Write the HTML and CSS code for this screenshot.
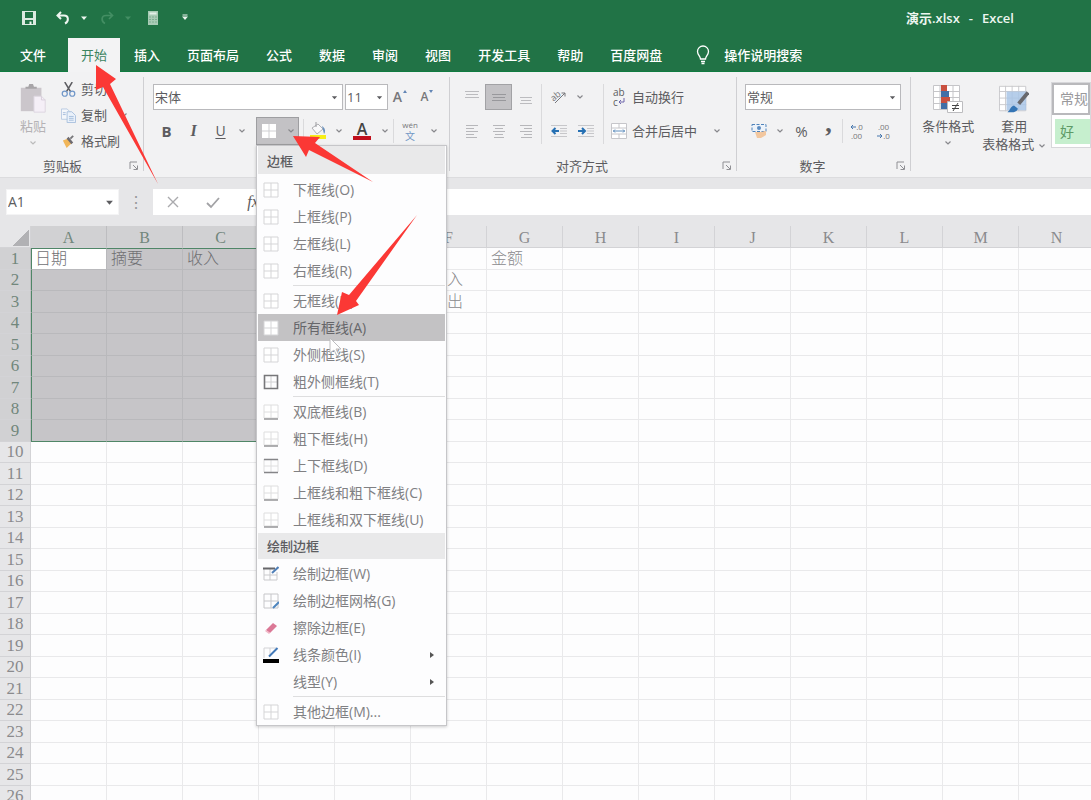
FILE: index.html
```html
<!DOCTYPE html>
<html lang="zh-CN">
<head>
<meta charset="utf-8">
<title>演示.xlsx - Excel</title>
<link rel="stylesheet" href="styles.css">
</head>
<body>
<svg class="defs" aria-hidden="true">
  <symbol id="chev" viewBox="0 0 8 8"><path d="M1.500 2.500 4 5 6.500 2.500" fill="none" stroke="currentColor" stroke-width="1.200"/></symbol>
  <symbol id="caret" viewBox="0 0 8 8"><path d="M1 2.500h6L4 6z" fill="currentColor"/></symbol>
  <symbol id="launch" viewBox="0 0 10 10"><path d="M1 8V1h7M4 4l4 4M8.500 4.500v4h-4" fill="none" stroke="#909094"/></symbol>
  <symbol id="grid" viewBox="0 0 16 16"><path d="M1 1h14v14H1zM8 1v14M1 8h14" fill="#fff" stroke="#d5d5d7"/></symbol>
  <symbol id="grid-outer" viewBox="0 0 16 16"><path d="M8 1v14M1 8h14" stroke="#d0d0d2"/><path d="M1.500 1.500h13v13h-13z" fill="none" stroke="#77777a" stroke-width="1.600"/></symbol>
  <symbol id="grid-bottom" viewBox="0 0 16 16"><path d="M1 1h14v13H1zM8 1v13M1 8h14" fill="#fff" stroke="#dededf"/><path d="M1 15h14" stroke="#949497" stroke-width="1.500"/></symbol>
  <symbol id="grid-topbottom" viewBox="0 0 16 16"><path d="M1 1v13M15 1v13M8 1v13M1 8h14" stroke="#dededf"/><path d="M1 1.500h14M1 14.500h14" stroke="#858588" stroke-width="1.500"/></symbol>
</svg>

<div class="app">
  <header class="titlebar">
    <button class="qat save" aria-label="保存"><svg viewBox="0 0 14 14"><path d="M0 0h14v14H0z" fill="#dcebe1"/><path d="M3 1h8v6H3zM3 9h8v4H3z" fill="#217346"/><path d="M7.500 10.500h2V14h-2z" fill="#edf6f0"/></svg></button>
    <button class="qat undo" aria-label="撤消"><svg viewBox="0 0 14 14"><path d="M5 1 1.500 4.500 5 8M2 4.500h6c5 0 5 6 1 8" fill="none" stroke="#edf6f0" stroke-width="2"/></svg></button>
    <button class="qat mini" aria-label="撤消选项"><svg viewBox="0 0 8 8"><use href="#caret"/></svg></button>
    <button class="qat redo" aria-label="恢复"><svg viewBox="0 0 14 14"><path d="M9 1l3.500 3.500L9 8M12 4.500H6c-5 0-5 6-1 8" fill="none" stroke="#438e63" stroke-width="1.700"/></svg></button>
    <button class="qat mini dim" aria-label="恢复选项"><svg viewBox="0 0 8 8"><use href="#caret"/></svg></button>
    <button class="qat calc" aria-label="计算器"><svg viewBox="0 0 14 14"><path d="M2 0h10v14H2z" fill="#a9cbb6"/><path d="M3.500 1.500h7v2h-7z" fill="#e3f0e8"/><path d="M3 6h8M3 8.500h8M3 11h8" stroke="#7eae92" stroke-dasharray="2 1"/></svg></button>
    <button class="qat more" aria-label="自定义快速访问工具栏"><svg viewBox="0 0 8 8"><path d="M1.500 1h5" stroke="currentColor"/><use href="#caret"/></svg></button>
    <h1 class="doc-title"><span>演示.xlsx</span><span>-</span><span>Excel</span></h1>
  </header>

  <nav class="tabs">
    <button class="tab file">文件</button>
    <button class="tab active">开始</button>
    <button class="tab">插入</button>
    <button class="tab">页面布局</button>
    <button class="tab">公式</button>
    <button class="tab">数据</button>
    <button class="tab">审阅</button>
    <button class="tab">视图</button>
    <button class="tab">开发工具</button>
    <button class="tab">帮助</button>
    <button class="tab">百度网盘</button>
    <button class="tab tell"><svg viewBox="0 0 14 20"><path d="M4.500 14c0-3-3-4-3-7.500a5.500 5.500 0 0 1 11 0c0 3.500-3 4.500-3 7.500zM5 16.500h4M5.500 18.500h3" fill="none" stroke="#fff" stroke-width="1.300"/></svg>操作说明搜索</button>
  </nav>

  <section class="ribbon">
    <div class="group clipboard">
      <div class="group-body">
        <button class="big paste"><svg viewBox="0 0 30 32"><path d="M2 4h22v25H2z" fill="#cbc6cb"/><path d="M7 5V3h3l1-3h4l1 3h3v2z" fill="#a8a5a8"/><path d="M16 13h8l4 4v13H16z" fill="#f5eff7" stroke="#dcd5df"/><path d="M24 13v4h4" fill="none" stroke="#d6ceda"/></svg><span>粘贴</span><svg class="chev"><use href="#chev"/></svg></button>
        <div class="clip-list">
          <button><svg viewBox="0 0 16 16"><path d="M4 0l6 10M12 0 6 10" stroke="#5c5c60" stroke-width="1.600"/><circle cx="4" cy="12.500" r="2.700" fill="none" stroke="#6f96c8" stroke-width="1.300"/><circle cx="12" cy="12.500" r="2.700" fill="none" stroke="#6f96c8" stroke-width="1.300"/></svg>剪切</button>
          <button><svg viewBox="0 0 16 16"><path d="M.500 1h6l3 3v8h-9z" fill="#f4f7fb" stroke="#b9cbe2"/><path d="M6.500 4h5l4 4v7.500h-9z" fill="#eaf1fa" stroke="#a9c0dd"/><path d="M8.500 9h5M8.500 11h5M8.500 13h5M2 5h3M2 7h3" stroke="#a4bddc"/></svg>复制<svg class="chev"><use href="#chev"/></svg></button>
          <button><svg viewBox="0 0 16 16"><path d="M2 7l5-2 4 5-5 5z" fill="#f1b659"/><path d="M6 5l2-2 5 6-2 2z" fill="#6e6b70"/><path d="M10 5l3-3" stroke="#77777a" stroke-width="2"/></svg>格式刷</button>
        </div>
      </div>
      <footer><span>剪贴板</span><button aria-label="剪贴板设置"><svg><use href="#launch"/></svg></button></footer>
    </div>
    <i class="rule"></i>

    <div class="group font">
      <div class="group-body rows">
        <div class="row">
          <label class="combo face"><select aria-label="字体"><option>宋体</option></select><svg><use href="#caret"/></svg></label>
          <label class="combo size"><select aria-label="字号"><option>11</option></select><svg><use href="#caret"/></svg></label>
          <button class="tool grow" aria-label="增大字号">A<svg viewBox="0 0 8 8"><path d="M1 4 3 1l2 3z" fill="#6286b5"/></svg></button>
          <button class="tool shrink" aria-label="减小字号">A<svg viewBox="0 0 8 8"><path d="M1 1h4L3 4z" fill="#6286b5"/></svg></button>
        </div>
        <div class="row">
          <button class="tool bold">B</button>
          <button class="tool italic">I</button>
          <button class="tool under">U</button>
          <button class="drop" aria-label="下划线选项"><svg><use href="#chev"/></svg></button>
          <div class="borders">
            <button class="borders-btn" aria-label="边框" aria-expanded="true"><svg class="ic" viewBox="0 0 16 16"><path d="M1 1h14v14H1z" fill="#fff"/><path d="M8 1v14M1 8h14" stroke="#cfcfd2"/></svg><svg class="chev"><use href="#chev"/></svg></button>
            <div class="menu" role="menu">
              <h2>边框</h2>
              <button role="menuitem"><svg><use href="#grid"/></svg>下框线(O)</button>
              <button role="menuitem"><svg><use href="#grid"/></svg>上框线(P)</button>
              <button role="menuitem"><svg><use href="#grid"/></svg>左框线(L)</button>
              <button role="menuitem"><svg><use href="#grid"/></svg>右框线(R)</button>
              <hr>
              <button role="menuitem"><svg><use href="#grid"/></svg>无框线(N)</button>
              <button role="menuitem" class="hot"><svg><use href="#grid"/></svg>所有框线(A)</button>
              <button role="menuitem"><svg><use href="#grid"/></svg>外侧框线(S)</button>
              <button role="menuitem"><svg><use href="#grid-outer"/></svg>粗外侧框线(T)</button>
              <hr>
              <button role="menuitem"><svg><use href="#grid-bottom"/></svg>双底框线(B)</button>
              <button role="menuitem"><svg><use href="#grid-bottom"/></svg>粗下框线(H)</button>
              <button role="menuitem"><svg><use href="#grid-topbottom"/></svg>上下框线(D)</button>
              <button role="menuitem"><svg><use href="#grid-bottom"/></svg>上框线和粗下框线(C)</button>
              <button role="menuitem"><svg><use href="#grid-bottom"/></svg>上框线和双下框线(U)</button>
              <h2 class="second">绘制边框</h2>
              <button role="menuitem"><svg viewBox="0 0 16 16"><path d="M1 3v11h13V6M7 3v11M1 9h13" fill="none" stroke="#c9c9cc"/><path d="M0 2.500h12" stroke="#66666a" stroke-width="2"/><path d="M15.500 1 9 7" stroke="#4f7fb8" stroke-width="2"/></svg>绘制边框(W)</button>
              <button role="menuitem"><svg viewBox="0 0 16 16"><path d="M1 1h14v14H1zM8 1v14M1 8h14" fill="none" stroke="#c6c6c9"/><path d="M16 9l-6 6" stroke="#4f86bf" stroke-width="2"/></svg>绘制边框网格(G)</button>
              <button role="menuitem"><svg viewBox="0 0 16 16"><path d="M3 10 10 3l4 3-7 7z" fill="#db7896"/><path d="M3 10l4 3-1 1-4-3z" fill="#f0b4c4"/></svg>擦除边框(E)</button>
              <button role="menuitem"><svg viewBox="0 0 16 16"><path d="M1 11V1h12M7 1v9" fill="none" stroke="#d3d3d6"/><path d="M14.500 1 6 9.500" stroke="#4279b8" stroke-width="2"/><path d="M0 12h16v4H0z" fill="#000"/></svg>线条颜色(I)<svg class="sub" viewBox="0 0 8 8"><path d="M2 1v6l4-3z" fill="#555"/></svg></button>
              <button role="menuitem"><svg></svg>线型(Y)<svg class="sub" viewBox="0 0 8 8"><path d="M2 1v6l4-3z" fill="#555"/></svg></button>
              <hr>
              <button role="menuitem"><svg><use href="#grid"/></svg>其他边框(M)...</button>
              <svg class="pointer" viewBox="0 0 14 20"><path d="M1 1v15l4-3 3 6 2-1-3-6h5z" fill="#fff" stroke="#bcbcbf"/></svg>
            </div>
          </div>
          <i class="divide"></i>
          <button class="tool" aria-label="填充颜色"><svg class="ic18" viewBox="0 0 18 18"><path d="M3 6l6-4 5 5-6 5z" fill="#f9f9fa" stroke="#b0b0b4"/><path d="M7 0v5" stroke="#9a9a9e"/><path d="M13 4c3 2 4 5 2 8z" fill="#6b92bd"/><path d="M1 13h16v4H1z" fill="#f7ee17"/></svg></button>
          <button class="drop" aria-label="填充选项"><svg><use href="#chev"/></svg></button>
          <button class="tool color" aria-label="字体颜色">A</button>
          <button class="drop" aria-label="颜色选项"><svg><use href="#chev"/></svg></button>
          <i class="divide"></i>
          <button class="tool phonetic" aria-label="拼音"><small>wén</small><span>文</span></button>
          <button class="drop" aria-label="拼音选项"><svg><use href="#chev"/></svg></button>
        </div>
      </div>
    </div>
    <i class="rule"></i>

    <div class="group align">
      <div class="group-body align-body">
        <div class="align-grid">
          <button class="tool" aria-label="顶端对齐"><svg class="ic16" viewBox="0 0 16 16"><path d="M1 2.500h14M2 5.500h12M1 8.500h14" stroke="#bcbcbf"/></svg></button>
          <button class="tool on" aria-label="垂直居中"><svg class="ic16" viewBox="0 0 16 16"><path d="M1 5.500h14M2 8.500h12M1 11.500h14" stroke="#98989c"/></svg></button>
          <button class="tool" aria-label="底端对齐"><svg class="ic16" viewBox="0 0 16 16"><path d="M2 8.500h12M3 11.500h10M2 14.500h12" stroke="#bcbcbf"/></svg></button>
          <button class="tool" aria-label="左对齐"><svg class="ic16" viewBox="0 0 16 16"><path d="M2 2.500h12M2 5.500h8M2 8.500h12M2 11.500h8M2 14.500h11" stroke="#b7b7ba"/></svg></button>
          <button class="tool" aria-label="居中"><svg class="ic16" viewBox="0 0 16 16"><path d="M2 2.500h12M4 5.500h8M2 8.500h12M4 11.500h8M3 14.500h10" stroke="#b7b7ba"/></svg></button>
          <button class="tool" aria-label="右对齐"><svg class="ic16" viewBox="0 0 16 16"><path d="M2 2.500h12M6 5.500h8M2 8.500h12M6 11.500h8M3 14.500h11" stroke="#b7b7ba"/></svg></button>
        </div>
        <i class="divide tall"></i>
        <div class="rows indent">
          <div class="row"><button class="tool" aria-label="方向"><svg class="ic16" viewBox="0 0 16 16"><text x="0" y="10" font-size="9" fill="#77777a" transform="rotate(-40 5 8)">ab</text><path d="M4 14 14 4M10.500 4H14v3.500" fill="none" stroke="#77777a"/></svg></button><button class="drop" aria-label="方向选项"><svg><use href="#chev"/></svg></button></div>
          <div class="row"><button class="tool" aria-label="减少缩进"><svg class="ic16" viewBox="0 0 16 16"><path d="M0 2.500h16M9 5.500h7M9 8h7M9 10.500h7M0 13.500h16" stroke="#c7c7ca"/><path d="M8 8H1.500M4.500 5l-3 3 3 3" fill="none" stroke="#2670b3" stroke-width="2"/></svg></button><button class="tool" aria-label="增加缩进"><svg class="ic16" viewBox="0 0 16 16"><path d="M0 2.500h16M9 5.500h7M9 8h7M9 10.500h7M0 13.500h16" stroke="#c7c7ca"/><path d="M0 8h7M4 5l3 3-3 3" fill="none" stroke="#2670b3" stroke-width="2"/></svg></button></div>
        </div>
        <i class="divide tall"></i>
        <div class="rows wrap">
          <div class="row"><button class="wide"><span class="wrap-icon"><span>ab</span><span>c<svg viewBox="0 0 8 8"><path d="M6 0v4H1M3 2 1 4l2 2" fill="none" stroke="#6f67ac"/></svg></span></span>自动换行</button></div>
          <div class="row"><button class="wide"><svg class="ic16" viewBox="0 0 16 16"><path d="M.500.500h15v15H.500zM0 5h16M0 11h16M8 0v5M8 11v5" fill="#fff" stroke="#c6c6ca"/><path d="M2 8h12M4 6.500 2.500 8 4 9.500M12 6.500 13.500 8 12 9.500" fill="none" stroke="#5c8cbc"/></svg>合并后居中</button><button class="drop" aria-label="合并选项"><svg><use href="#chev"/></svg></button></div>
        </div>
      </div>
      <footer><span>对齐方式</span><button aria-label="对齐设置"><svg><use href="#launch"/></svg></button></footer>
    </div>
    <i class="rule"></i>

    <div class="group number">
      <div class="group-body rows">
        <div class="row"><label class="combo format"><select aria-label="数字格式"><option>常规</option></select><svg><use href="#caret"/></svg></label></div>
        <div class="row">
          <button class="tool" aria-label="会计数字格式"><svg class="ic16" viewBox="0 0 16 16"><path d="M1 1.500h14v7H1z" fill="#edf3fa" stroke="#4f83bb" stroke-dasharray="3 1.500"/><circle cx="8" cy="5" r="2" fill="#5c8cc0"/><path d="M4 9h6l5-1v4l-5 3H6z" fill="#f2c79f"/></svg></button>
          <button class="drop" aria-label="会计格式选项"><svg><use href="#chev"/></svg></button>
          <button class="tool percent">%</button>
          <button class="tool comma">,</button>
          <i class="divide"></i>
          <button class="tool decimals" aria-label="增加小数位数"><span><svg viewBox="0 0 6 6"><path d="M6 3H1M3 1 1 3l2 2" fill="none" stroke="#4777ad"/></svg>.0</span><span>.00</span></button>
          <button class="tool decimals" aria-label="减少小数位数"><span>.00</span><span><svg viewBox="0 0 6 6"><path d="M0 3h5M3 1l2 2-2 2" fill="none" stroke="#4777ad"/></svg>.0</span></button>
        </div>
      </div>
      <footer><span>数字</span><button aria-label="数字设置"><svg><use href="#launch"/></svg></button></footer>
    </div>
    <i class="rule"></i>

    <div class="group styles">
      <div class="group-body">
        <button class="big"><svg viewBox="0 0 30 30"><path d="M.500 1.500h26v24H.500zM7 1v25M20 1v25M0 7.500h27M0 13.500h27M0 19.500h27" fill="#fff" stroke="#c5c5c8"/><path d="M8 1h6v6H8zM8 13h9v6H8z" fill="#c9503f"/><path d="M8 7h8v6H8zM8 19h6v6H8z" fill="#426fa6"/><path d="M14.500 17.500h15v11h-15z" fill="#fff" stroke="#bcbcbf"/><path d="M19 21.500h7M19 24.500h7M25 19l-5 8" stroke="#444"/></svg><span>条件格式</span><svg class="chev"><use href="#chev"/></svg></button>
        <button class="big"><svg viewBox="0 0 32 30"><path d="M.500 1.500h28v26H.500zM7 1v27M14 1v27M21 1v27M0 7h29M0 14h29M0 21h29" fill="#fff" stroke="#c9c9cc"/><path d="M8 7h21v20H8z" fill="#a9c5e6" opacity=".85"/><path d="M31 8 21 20" stroke="#69696d" stroke-width="4"/><path d="M9 29c3-2 3-6 7-7l4 3c0 3-4 5-11 4z" fill="#3475b5"/></svg><span>套用</span><span class="last">表格格式<svg class="chev"><use href="#chev"/></svg></span></button>
        <div class="gallery"><button class="normal">常规</button><button class="good">好</button></div>
      </div>
    </div>
  </section>

  <section class="formula-bar">
    <label class="combo name"><select aria-label="名称框"><option>A1</option></select><svg><use href="#caret"/></svg></label>
    <span class="dots">⋮</span>
    <div class="formula">
      <button aria-label="取消"><svg viewBox="0 0 14 14"><path d="M2 2l10 10M12 2 2 12" fill="none" stroke="#aaaaad" stroke-width="1.400"/></svg></button>
      <button aria-label="输入"><svg viewBox="0 0 14 14"><path d="M1 8l4 4 8-9" fill="none" stroke="#a2a2a5" stroke-width="1.800"/></svg></button>
      <button class="fx">fx</button>
      <input type="text" aria-label="编辑栏">
    </div>
  </section>

  <main class="sheet"><table><thead></thead><tbody></tbody></table></main>
</div>

<svg class="arrows" viewBox="0 0 1091 800" aria-hidden="true">
  <path d="M96 65 116 79 110 84 158 184 103 87 96 90z"/>
  <path d="M293 136 320 137 315 143 373 182 309 150 306 157z"/>
  <path d="M337 315 342 292 349 295 417 215 356 301 359 305z"/>
</svg>
<script src="sheet.js"></script>
</body>
</html>
```

FILE: sheet.js
```js
const columns = 'ABCDEFGHIJKLMN'.split('');
const values = { A1: '日期', B1: '摘要', C1: '收入', G1: '金额', F2: '总收入', F3: '总支出' };
const lastCol = 3;
const lastRow = 9;

const headRow = document.createElement('tr');
headRow.innerHTML = '<th class="corner" aria-label="全选"></th>' +
  columns.map((c, i) => `<th scope="col"${i <= lastCol ? ' class="sel"' : ''}>${c}</th>`).join('');
document.querySelector('thead').append(headRow);

const body = document.querySelector('tbody');
for (let r = 1; r <= 26; r++) {
  const row = document.createElement('tr');
  row.innerHTML = `<th scope="row"${r <= lastRow ? ' class="sel"' : ''}>${r}</th>` +
    columns.map((c, i) => {
      const cls = [];
      if (i <= lastCol && r <= lastRow) {
        cls.push('sel');
        if (i === 0 && r === 1) cls.push('current');
        if (i === 0) cls.push('edge-l');
        if (r === 1) cls.push('edge-t');
        if (i === lastCol) cls.push('edge-r');
        if (r === lastRow) cls.push('edge-b');
      }
      return `<td class="${cls.join(' ')}">${values[c + r] || ''}</td>`;
    }).join('');
  body.append(row);
}
```

FILE: styles.css
```css
* { box-sizing: border-box; }
body {
  margin: 0;
  font: 13px/18px "Open Sans", "Noto Sans CJK SC", sans-serif;
  color: #5c5c60;
}
button, select, input { font: inherit; color: inherit; border: 0; background: none; padding: 0; margin: 0; }
button { display: flex; align-items: center; justify-content: center; white-space: nowrap; }
svg { flex: none; width: 8px; height: 8px; }
.defs { display: none; }
.app { display: flex; flex-direction: column; height: 100vh; overflow: hidden; background: #fff; }

/* Title bar */
.titlebar { display: flex; flex: none; align-items: center; height: 38px; padding: 0 77px 2px 22px; background: #217346; color: #edf6f0; }
.qat { width: 14px; height: 14px; }
.qat svg { width: 14px; height: 14px; }
.qat.undo { margin-left: 20px; }
.qat.mini, .qat.more { width: 8px; }
.qat.mini { margin-left: 10px; }
.qat.mini svg, .qat.more svg { width: 8px; height: 8px; }
.qat.redo { margin-left: 12px; }
.qat.dim { color: #438e63; }
.qat.calc { margin-left: 14px; }
.qat.more { margin-left: 21px; }
.doc-title { display: flex; gap: 9px; margin: 0 0 0 auto; font-size: 13px; font-weight: 600; }

/* Ribbon tabs */
.tabs { display: flex; flex: none; gap: 1px; height: 34px; padding-left: 7px; background: #217346; border-bottom: 1px solid #107c41; }
.tab { padding: 0 13px; color: #fff; font-weight: 500; }
.tab.file { margin-right: 8px; }
.tab.active { background: #f3f3f4; color: #3c8460; font-weight: 400; margin-bottom: -1px; }
.tab.tell { gap: 14px; padding-left: 20px; }
.tab.tell svg { width: 14px; height: 20px; }

/* Ribbon */
.ribbon { display: flex; flex: none; height: 106px; background: #f2f2f3; border-bottom: 1px solid #dcdcde; }
.rule { flex: none; width: 1px; margin: 5px 0 6px; background: #cfcfd2; }
.group { display: flex; flex: none; flex-direction: column; }
.group-body { display: flex; flex: 1; padding-top: 12px; }
.group footer { display: flex; height: 22px; align-items: center; padding-right: 4px; }
.group footer span { flex: 1; padding-right: 16px; text-align: center; }
.group footer svg { width: 10px; height: 10px; }
.rows { display: flex; flex-direction: column; gap: 8px; }
.row { display: flex; height: 26px; align-items: center; }
.clipboard { width: 143px; }
.font { width: 305px; padding-left: 9px; }
.align { width: 286px; padding-left: 8px; }
.number { width: 173px; padding-left: 8px; }
.styles { flex: 1; min-width: 0; padding-left: 9px; overflow: hidden; }
.clipboard footer { padding-left: 12px; }
.chev { color: #88888c; }

.big { flex-direction: column; justify-content: flex-start; height: 66px; line-height: 18px; }
.big > svg:first-child { width: 30px; height: 30px; margin-bottom: 3px; }
.big .last { display: flex; align-items: center; gap: 4px; }
.styles .big { width: 60px; }
.styles .big + .big { width: 80px; }
.styles .big .chev { margin-top: 4px; }
.paste { width: 30px; margin-left: 18px; color: #b5b2b5; }
.paste .chev { margin-top: 4px; color: #bbb; }
.clip-list { display: flex; flex-direction: column; margin: -8px 0 0 13px; }
.clip-list button { justify-content: flex-start; height: 26px; gap: 5px; }
.clip-list svg { width: 15px; height: 15px; }
.clip-list .chev { width: 8px; height: 8px; margin-left: 8px; }

.combo { display: grid; align-items: center; height: 26px; background: #fff; border: 1px solid #b9b9bc; }
.combo select, .combo svg { grid-area: 1 / 1; }
.combo select { width: 100%; height: 24px; padding-left: 1px; appearance: none; outline: 0; }
.combo svg { width: 7px; height: 7px; margin-right: 4px; justify-self: end; pointer-events: none; }
.face { width: 190px; margin-right: 2px; }
.size { width: 43px; }
.format { width: 156px; }

.tool { width: 27px; height: 26px; }
.grow svg, .shrink svg { align-self: flex-start; margin-top: 5px; }
.grow { font-size: 14px; font-weight: 600; color: #77777a; }
.shrink { font-size: 12px; font-weight: 600; color: #77777a; }
.bold { font-size: 15px; font-weight: 700; }
.italic { font: italic 700 16px/18px "Liberation Serif", serif; }
.under { font-size: 14px; text-decoration: underline; text-underline-offset: 2px; }
.drop { width: 16px; height: 26px; color: #88888c; }
.ic16 { width: 16px; height: 16px; }
.ic18 { width: 18px; height: 18px; }
.divide { width: 1px; height: 24px; background: #dadadc; }
.divide.tall { height: 60px; }
.color { width: 18px; height: 18px; margin: 0 6px; border-bottom: 4px solid #c00f1c; font-size: 16px; font-weight: 600; color: #444; }
.phonetic { flex-direction: column; width: 32px; color: #7298c5; font-size: 10px; line-height: 12px; }
.phonetic small { font-size: 8px; line-height: 10px; color: #77777a; }
.align-grid { display: grid; grid-template-columns: repeat(3, 27px); gap: 8px 0; align-content: start; margin-right: 2px; }
.tool.on { background: #c3c2c5; border: 1px solid #a2a2a5; }
.indent { width: 61px; padding-left: 3px; }
.wrap { padding-left: 7px; }
.wrap-icon { display: flex; flex-direction: column; width: 16px; padding-left: 2px; font-size: 10px; line-height: 10px; text-align: left; }
.wrap-icon span { display: flex; align-items: center; }
.wide { gap: 5px; }
.wide + .drop { margin-left: 12px; }
.percent { font-size: 15px; }
.comma { font: 700 26px/20px "Liberation Serif", serif; padding-bottom: 14px; }
.decimals { flex-direction: column; font-size: 8px; line-height: 9px; color: #77777a; }
.decimals span { display: flex; align-items: center; }
.decimals svg { width: 6px; height: 6px; }

.gallery { display: flex; flex: 1; flex-direction: column; height: 66px; margin: -2px 0 0 -1px; background: #fff; border: 1px solid #d7d7da; }
.gallery button { justify-content: flex-start; padding-left: 6px; font-size: 14px; }
.gallery .normal { height: 32px; border: 2px solid #b9b9bc; color: #99999c; }
.gallery .good { height: 25px; margin: 4px 0 0 3px; padding-left: 5px; background: #c6efce; color: #5e9a67; }

/* Borders drop-down */
.borders { position: relative; margin: 0 4px 0 6px; }
.borders-btn { width: 43px; height: 28px; gap: 10px; background: #c3c2c5; border: 1px solid #9e9ea1; }
.borders-btn .ic { width: 16px; height: 16px; }
.menu { position: absolute; z-index: 2; top: 28px; left: 0; width: 191px; background: #fdfdfe; border: 1px solid #c6c6c9; box-shadow: 0 1px 3px #0003; }
.menu h2 { height: 28px; margin: 0 1px 2px; padding-left: 9px; font-size: 13px; line-height: 30px; font-weight: 500; background: #e9e9ea; }
.menu .second { height: 26px; margin-bottom: 1px; line-height: 27px; }
.menu button { width: 187px; height: 27px; margin: 0 1px; padding-left: 5px; justify-content: flex-start; gap: 14px; font-size: 14px; color: #808083; }
.menu button > svg { width: 16px; height: 16px; }
.menu button > .sub { width: 8px; height: 8px; margin: 0 9px 0 auto; }
.menu .hot { background: #c3c2c4; color: #66666a; }
.menu hr { height: 1px; margin: 1px 1px 1px 36px; border: 0; background: #dededf; }
.menu .pointer { position: absolute; top: 191px; left: 72px; width: 14px; height: 20px; }

/* Formula bar */
.formula-bar { display: flex; flex: none; height: 48px; padding: 11px 0 11px 6px; background: #e6e6e8; }
.name { width: 113px; border-color: #f4f4f5; font-size: 14px; }
.name svg { width: 9px; height: 9px; }
.dots { width: 34px; text-align: center; line-height: 26px; font-size: 16px; color: #98989b; }
.formula { display: flex; flex: 1; background: #fff; }
.formula button { width: 40px; }
.formula svg { width: 14px; height: 14px; }
.formula .fx { font: italic 16px/20px "Liberation Serif", serif; }
.formula input { flex: 1; min-width: 0; outline: 0; }

/* Worksheet */
.sheet { flex: 1; min-height: 0; overflow: hidden; }
.sheet table { width: max-content; table-layout: fixed; border-spacing: 0; font: 16px/20px "Liberation Serif", "Noto Sans CJK SC", serif; color: #8a8a8d; }
.sheet th, .sheet td { height: 21px; padding: 0; overflow: hidden; white-space: nowrap; border: solid #e9e9eb; border-width: 0 1px 1px 0; }
.sheet tr:nth-child(odd) td { height: 22px; }
.sheet td { width: 76px; min-width: 76px; max-width: 76px; padding-left: 4px; font-size: 16px; font-weight: 300; background: #fdfdfe; }
.sheet th { font-weight: 400; background: #e6e6e8; border-color: #d3d3d6; }
.sheet th:first-child { width: 31px; min-width: 31px; font-size: 17px; }
.sheet th.sel { background: #d1d1d3; color: #71877c; border-right-color: #bdbdc0; }
.sheet thead th { height: 22px; padding-top: 2px; line-height: 18px; }
.sheet .corner { background: linear-gradient(135deg, #e6e6e8 50%, #b1b1b4 50%) no-repeat 12px 3px / 17px 17px #e6e6e8; }
.sheet td.sel { background: #c6c5c8; border-color: #b9b9bc; color: #707073; }
.sheet td.current { background: #fff; }
.sheet td.edge-l { border-left: 1px solid #4f8667; padding-left: 3px; }
.sheet td.edge-t { border-top: 1px solid #4f8667; }
.sheet td.edge-r { border-right-color: #4f8667; }
.sheet td.edge-b { border-bottom-color: #4f8667; }

/* Annotation arrows */
.arrows { position: absolute; z-index: 3; top: 0; left: 0; width: 1091px; height: 800px; fill: #fb3835; pointer-events: none; }
```
